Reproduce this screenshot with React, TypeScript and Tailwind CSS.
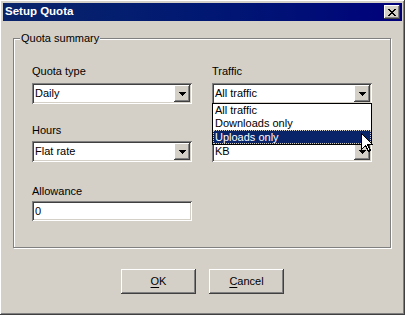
const raised =
  "shadow-[inset_-1px_-1px_#404040,inset_1px_1px_#ffffff,inset_-2px_-2px_#808080,inset_2px_2px_#d4d0c8]";
const sunken =
  "shadow-[inset_1px_1px_#808080,inset_-1px_-1px_#ffffff,inset_2px_2px_#404040,inset_-2px_-2px_#d4d0c8]";

const DownArrow = () => (
  <svg width="7" height="4" viewBox="0 0 7 4" shapeRendering="crispEdges">
    <path d="M0 0h7v1H0zM1 1h5v1H1zM2 2h3v1H2zM3 3h1v1H3z" fill="#000" />
  </svg>
);

const CloseGlyph = () => (
  <svg width="8" height="7" viewBox="0 0 8 7" shapeRendering="crispEdges">
    <path
      d="M0 0h2v1H0zM6 0h2v1H6zM1 1h2v1H1zM5 1h2v1H5zM2 2h4v1H2zM3 3h2v1H3zM2 4h4v1H2zM1 5h2v1H1zM5 5h2v1H5zM0 6h2v1H0zM6 6h2v1H6z"
      fill="#000"
    />
  </svg>
);

const Cursor = () => (
  <svg width="13" height="20" viewBox="0 0 13 20" shapeRendering="crispEdges">
    <path
      d="M0.5 0.5 V16.5 L4.5 12.5 L7.5 18.5 L9.5 17.5 L6.5 11.5 H11.5 Z"
      fill="#fff"
      stroke="#000"
      strokeWidth="1"
    />
  </svg>
);

const Combo = ({ value }: { value: string }) => (
  <div className={`flex h-[21px] w-[160px] bg-white p-[2px] ${sunken}`}>
    <div className="flex flex-1 items-center pl-[1px]">{value}</div>
    <div className={`flex h-[17px] w-[16px] items-center justify-center bg-[#d4d0c8] ${raised}`}>
      <DownArrow />
    </div>
  </div>
);

const Label = ({ text }: { text: string }) => (
  <div className="h-[13px] leading-[13px]">{text}</div>
);

export default function App() {
  return (
    <div
      className={`relative flex h-[315px] w-[405px] flex-col bg-[#d4d0c8] p-[3px] text-[11px] text-black ${raised}`}
      style={{ fontFamily: '"Liberation Sans", Arial, sans-serif' }}
    >
      {/* title bar */}
      <div className="flex h-[18px] items-center bg-gradient-to-r from-[#0a246a] to-[#00007b] pl-[2px] pr-[2px]">
        <span className="flex-1 text-[11.5px] font-bold text-white">Setup Quota</span>
        <div className={`flex h-[14px] w-[16px] items-center justify-center bg-[#d4d0c8] ${raised}`}>
          <CloseGlyph />
        </div>
      </div>

      <div className="flex flex-col px-[10px]">
        {/* group box */}
        <div className="relative mt-[17px] h-[210px] w-[378px] border border-[#808080] shadow-[inset_1px_1px_#ffffff,1px_1px_#ffffff]">
          <span className="absolute -top-[8px] left-[6px] bg-[#d4d0c8] px-[1px] leading-[14px]">
            Quota summary
          </span>
          <div className="flex gap-[20px] pl-[18px] pt-[26px]">
            <div className="flex w-[160px] flex-col">
              <Label text="Quota type" />
              <div className="mt-[5px]">
                <Combo value="Daily" />
              </div>
              <div className="mt-[20px]">
                <Label text="Hours" />
              </div>
              <div className="mt-[4px]">
                <Combo value="Flat rate" />
              </div>
              <div className="mt-[23px]">
                <Label text="Allowance" />
              </div>
              <div className={`mt-[3px] flex h-[20px] w-[160px] items-center bg-white pl-[3px] ${sunken}`}>
                0
              </div>
            </div>

            <div className="flex w-[160px] flex-col">
              <Label text="Traffic" />
              <div className="relative mt-[5px]">
                <Combo value="All traffic" />
                <div className="absolute left-0 top-[20px] z-10 flex w-[160px] flex-col border border-black bg-white">
                  <div className="h-[13px] pl-[2px] leading-[13px]">All traffic</div>
                  <div className="h-[13px] pl-[2px] leading-[13px]">Downloads only</div>
                  <div className="h-[14px] border border-dotted border-[#d4d0c8] bg-[#0a246a] pl-[1px] leading-[12px] text-white">
                    Uploads only
                  </div>
                </div>
              </div>
              <div className="mt-[20px] h-[13px]" />
              <div className="mt-[4px]">
                <Combo value="KB" />
              </div>
            </div>
          </div>
        </div>

        {/* buttons */}
        <div className="mt-[21px] flex justify-center gap-[13px]">
          <div className={`flex h-[25px] w-[75px] items-center justify-center ${raised}`}>
            <span>
              <span className="underline underline-offset-2">O</span>K
            </span>
          </div>
          <div className={`flex h-[25px] w-[75px] items-center justify-center ${raised}`}>
            <span>
              <span className="underline underline-offset-2">C</span>ancel
            </span>
          </div>
        </div>
      </div>

      <div className="absolute left-[361px] top-[133px] z-20">
        <Cursor />
      </div>
    </div>
  );
}
